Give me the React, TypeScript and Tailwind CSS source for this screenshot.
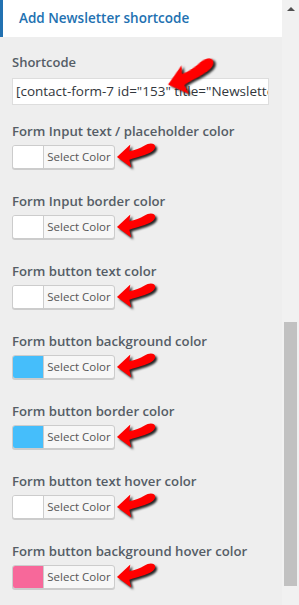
import React from 'react';

type ColorField = {
  label: string;
  color: string;
};

const fields: ColorField[] = [
  { label: 'Form Input text / placeholder color', color: '#ffffff' },
  { label: 'Form Input border color', color: '#ffffff' },
  { label: 'Form button text color', color: '#ffffff' },
  { label: 'Form button background color', color: '#45befb' },
  { label: 'Form button border color', color: '#45befb' },
  { label: 'Form button text hover color', color: '#ffffff' },
  { label: 'Form button background hover color', color: '#f7689a' },
];

// hand-drawn style red pointer used in the annotated screenshot
const RedArrow: React.FC<{ className?: string }> = ({ className }) => (
  <svg
    viewBox="0 0 44 28"
    className={className}
    style={{ filter: 'drop-shadow(2px 2px 1px rgba(0,0,0,0.85))' }}
  >
    <path
      d="M1 15 L15 2 L14 9 C20 8 25 6 30 3 C34 0 41 0 41 4 C41 9 35 11 30 13 C24 15 19 16 14 18 L16 26 Z"
      fill="#ff0000"
    />
  </svg>
);

const ColorButton: React.FC<{ color: string }> = ({ color }) => (
  <div className="relative flex h-[24px] w-[103px] rounded-[3px] border border-[#cccccc] bg-[#f7f7f7] shadow-[0_1px_0_#cccccc] overflow-hidden">
    <div className="w-[31px] h-full border-r border-[#cccccc]" style={{ background: color }} />
    <div className="flex-1 flex items-center justify-center text-[11.5px] text-[#555555] leading-none pb-px">
      Select Color
    </div>
  </div>
);

const App: React.FC = () => {
  return (
    <div className="flex w-[299px] h-[605px] overflow-hidden bg-[#eeeeee] font-['Open_Sans',sans-serif]">
      <div className="w-[282px] flex flex-col">
        <div className="h-[37px] bg-white border-l-[3px] border-[#2271b1] flex items-center pl-4">
          <span className="text-[13.5px] font-semibold text-[#2271b1]">Add Newsletter shortcode</span>
        </div>

        <div className="px-3 pt-[15px]">
          <div className="relative">
            <label className="block text-[13px] leading-[20px] font-semibold text-[#555d66]">Shortcode</label>
            <div className="mt-[6px] w-[257px] h-[27px] bg-white border border-[#dddddd] flex items-center pl-[3px] overflow-hidden whitespace-nowrap text-[13.5px] text-[#32373c]">
              [contact-form-7 id="153" title="Newsletter"]
            </div>
            <RedArrow className="absolute left-[154px] top-[8px] w-[54px] h-[36px] -rotate-12" />
          </div>

          <div className="mt-[16px] flex flex-col gap-[22px]">
            {fields.map((f) => (
              <div key={f.label} className="relative">
                <label className="block text-[13.2px] leading-[20px] font-semibold text-[#555d66] whitespace-nowrap">
                  {f.label}
                </label>
                <div className="mt-[4px] flex items-center">
                  <ColorButton color={f.color} />
                </div>
                <RedArrow className="absolute left-[104px] top-[21px] w-[42px] h-[28px]" />
              </div>
            ))}
          </div>
        </div>
      </div>

      <div className="w-[17px] bg-[#f1f1f1] flex flex-col items-center">
        <div className="mt-[7px] w-0 h-0 border-l-[4px] border-r-[4px] border-b-[4px] border-l-transparent border-r-transparent border-b-[#505050]" />
        <div className="mt-[311px] w-[13px] h-[264px] bg-[#c1c1c1]" />
      </div>
    </div>
  );
};

export default App;
